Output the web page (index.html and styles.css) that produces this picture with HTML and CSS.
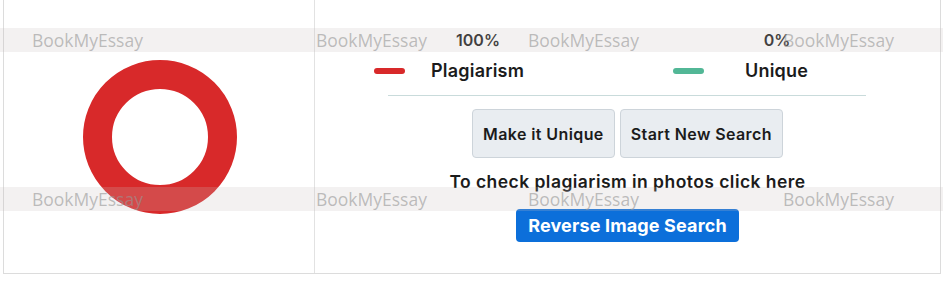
FILE: index.html
```html
<!DOCTYPE html>
<html>
<head>
<meta charset="utf-8">
<link rel="stylesheet" href="styles.css">
</head>
<body>
<div class="report">
  <div class="chart-cell">
    <div class="donut"></div>
  </div>
  <div class="result-cell">
    <div class="pct-row">
      <div class="pct">100%</div>
      <div class="pct">0%</div>
    </div>
    <div class="legend-row">
      <div class="legend legend-plag"><span class="swatch swatch-red"></span><span class="legend-label">Plagiarism</span></div>
      <div class="legend legend-unique"><span class="swatch swatch-green"></span><span class="legend-label">Unique</span></div>
    </div>
    <div class="divider"></div>
    <div class="actions">
      <button class="btn-light">Make it Unique</button>
      <button class="btn-light">Start New Search</button>
    </div>
    <div class="photo-text">To check plagiarism in photos click here</div>
    <button class="btn-primary">Reverse Image Search</button>
  </div>
</div>
<div class="watermark wm-top">
  <span class="wm wm1">BookMyEssay</span><span class="wm wm2">BookMyEssay</span><span class="wm wm3">BookMyEssay</span><span class="wm wm4">BookMyEssay</span>
</div>
<div class="watermark wm-bottom">
  <span class="wm wm1">BookMyEssay</span><span class="wm wm2">BookMyEssay</span><span class="wm wm3">BookMyEssay</span><span class="wm wm4">BookMyEssay</span>
</div>
</body>
</html>
```
FILE: styles.css
```css
* { box-sizing: border-box; }
body {
  margin: 0;
  background: #fff;
  font-family: "Inter", "Noto Sans", sans-serif;
  color: #1b1b1b;
  position: relative;
  width: 943px;
  height: 287px;
  overflow: hidden;
}
.report {
  margin-left: 3px;
  width: 938px;
  height: 274px;
  border: 1px solid #dcdcdc;
  border-top: none;
  display: flex;
}
.chart-cell {
  width: 311px;
  border-right: 1px solid #e2e2e2;
  display: flex;
  align-items: center;
  justify-content: center;
}
.donut {
  width: 154px;
  height: 154px;
  margin-left: 2px;
  border-radius: 50%;
  border: 29px solid #d8292a;
}
.result-cell {
  flex: 1;
  display: flex;
  flex-direction: column;
  align-items: center;
}
.pct-row {
  align-self: stretch;
  display: grid;
  grid-template-columns: 326px 272px;
  padding-top: 28px;
}
.pct {
  text-align: center;
  font-weight: 600;
  font-size: 16px;
  line-height: 24px;
}
.legend-row {
  align-self: stretch;
  display: grid;
  grid-template-columns: 326px 272px;
  margin-top: 7px;
  height: 24px;
}
.legend {
  display: flex;
  align-items: center;
  font-weight: 600;
  font-size: 18px;
  letter-spacing: 0.2px;
  line-height: 24px;
}
.legend-plag { padding-left: 59px; gap: 26px; }
.legend-unique { padding-left: 32px; gap: 41px; }
.swatch {
  width: 31px;
  height: 6px;
  border-radius: 3px;
}
.swatch-red { background: #d8292a; }
.swatch-green { background: #52b796; }
.divider {
  align-self: flex-start;
  margin-left: 73px;
  width: 478px;
  height: 1px;
  margin-top: 12px;
  background: #c9dbdb;
}
.actions {
  display: flex;
  gap: 5px;
  margin-top: 13px;
}
.btn-light {
  height: 49px;
  padding: 0 10px;
  background: #e9edf1;
  border: 1px solid #cdd4da;
  border-radius: 4px;
  font-family: inherit;
  font-weight: 600;
  font-size: 16px;
  letter-spacing: 0.4px;
  color: #1b1b1b;
}
.photo-text {
  margin-top: 12px;
  font-weight: 600;
  font-size: 17.5px;
  letter-spacing: 0.45px;
  line-height: 24px;
}
.btn-primary {
  margin-top: 15px;
  height: 33px;
  padding: 0 12px;
  background: #0c6fda;
  border: none;
  border-radius: 4px;
  color: #fff;
  font-family: inherit;
  font-weight: 700;
  font-size: 18px;
  letter-spacing: 0.15px;
}
.watermark {
  position: absolute;
  left: 0;
  width: 943px;
  height: 24px;
  background: rgba(200, 192, 192, 0.22);
  pointer-events: none;
  font-family: "Open Sans", "Noto Sans", sans-serif;
  font-size: 17.5px;
  line-height: 24px;
  color: rgba(150, 150, 150, 0.6);
}
.wm-top { top: 28px; }
.wm-bottom { top: 187px; }
.wm { position: absolute; top: 0; }
.wm1 { left: 32px; }
.wm2 { left: 316px; }
.wm3 { left: 528px; }
.wm4 { left: 783px; }
```
